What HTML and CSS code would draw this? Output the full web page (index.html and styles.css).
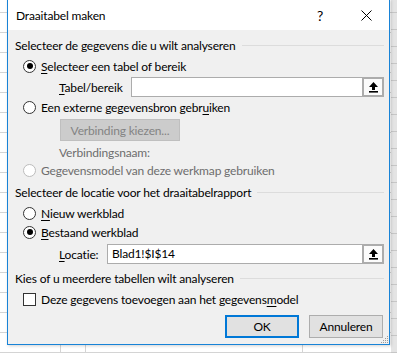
FILE: index.html
```html
<!DOCTYPE html>
<html lang="nl">
<head>
<meta charset="utf-8">
<title>Draaitabel maken</title>
<link rel="stylesheet" href="styles.css">
</head>
<body>
<div class="dialog">
  <div class="titlebar">
    <span class="title">Draaitabel maken</span>
    <span class="tb-btn help">?</span>
    <span class="tb-btn close">
      <svg width="11" height="11" viewBox="0 0 11 11"><path d="M0.5 0.5 L10.5 10.5 M10.5 0.5 L0.5 10.5" stroke="#000" stroke-width="1" fill="none"/></svg>
    </span>
  </div>
  <div class="content">
    <div class="group-head gh1"><span>Selecteer de gegevens die u wilt analyseren</span></div>
    <div class="opt r1"><span class="radio checked"></span><span><u>S</u>electeer een tabel of bereik</span></div>
    <div class="field f-tabel">
      <span class="field-label lbl-tabel"><u>T</u>abel/bereik</span>
      <div class="ref-input"><span class="ref-text"></span><span class="ref-btn"><svg width="11" height="12" viewBox="0 0 11 12"><path d="M5.5 1 L10 6 L7 6 L7 9 L4 9 L4 6 L1 6 Z" fill="#000"/><rect x="1" y="10" width="9" height="1.6" fill="#000"/></svg></span></div>
    </div>
    <div class="opt r2"><span class="radio"></span><span>Een externe gegevensbron gebr<u>u</u>iken</span></div>
    <div class="conn-row"><span class="btn-disabled">Verbinding kiezen...</span></div>
    <div class="opt-label vnaam">Verbindingsnaam:</div>
    <div class="opt r3 disabled"><span class="radio"></span><span>Gegevensmodel van deze werkmap gebruiken</span></div>
    <div class="group-head gh2"><span>Selecteer de locatie voor het draaitabelrapport</span></div>
    <div class="opt r4"><span class="radio"></span><span><u>N</u>ieuw werkblad</span></div>
    <div class="opt r5"><span class="radio checked"></span><span><u>B</u>estaand werkblad</span></div>
    <div class="field f-loc">
      <span class="field-label lbl-loc"><u>L</u>ocatie:</span>
      <div class="ref-input"><span class="ref-text">Blad1!$I$14</span><span class="ref-btn"><svg width="11" height="12" viewBox="0 0 11 12"><path d="M5.5 1 L10 6 L7 6 L7 9 L4 9 L4 6 L1 6 Z" fill="#000"/><rect x="1" y="10" width="9" height="1.6" fill="#000"/></svg></span></div>
    </div>
    <div class="group-head gh3"><span>Kies of u meerdere tabellen wilt analyseren</span></div>
    <div class="opt chk-row"><span class="checkbox"></span><span>Deze gegevens toevoegen aan het gegevens<u>m</u>odel</span></div>
    <div class="actions">
      <span class="btn default">OK</span>
      <span class="btn">Annuleren</span>
    </div>
    <svg class="grip" width="10" height="10" viewBox="0 0 10 10">
      <rect x="8" y="2" width="1" height="1" fill="#9a9a9a"/>
      <rect x="6" y="4" width="1" height="1" fill="#9a9a9a"/><rect x="8" y="4" width="1" height="1" fill="#9a9a9a"/>
      <rect x="4" y="6" width="1" height="1" fill="#9a9a9a"/><rect x="6" y="6" width="1" height="1" fill="#9a9a9a"/><rect x="8" y="6" width="1" height="1" fill="#9a9a9a"/>
      <rect x="2" y="8" width="1" height="1" fill="#9a9a9a"/><rect x="4" y="8" width="1" height="1" fill="#9a9a9a"/><rect x="6" y="8" width="1" height="1" fill="#9a9a9a"/><rect x="8" y="8" width="1" height="1" fill="#9a9a9a"/>
    </svg>
  </div>
</div>
</body>
</html>
```

FILE: styles.css
```css
* { box-sizing: border-box; }
html, body { margin: 0; height: 100%; }
body {
  position: relative;
  overflow: hidden;
  font-family: Lato, "Segoe UI", "Liberation Sans", sans-serif;
  font-size: 12px;
  letter-spacing: -0.16px;
  color: #000;
  background-color: #fff;
  background-image:
    repeating-linear-gradient(to bottom, transparent 0, transparent 12px, #c6c6c6 12px, #c6c6c6 13px, transparent 13px, transparent 17px),
    linear-gradient(to right, transparent 391px, #e4e4e4 391px),
    linear-gradient(to right, transparent 60px, #d4d4d4 60px, #d4d4d4 61px, transparent 61px, transparent 85px, #d4d4d4 85px, #d4d4d4 86px, transparent 86px, transparent 302px, #d4d4d4 302px, #d4d4d4 303px, transparent 303px),
    repeating-linear-gradient(to bottom, transparent 0, transparent 12px, #d4d4d4 12px, #d4d4d4 13px, transparent 13px, transparent 20px);
  background-size: 6px 100%, 100% 100%, 100% 100%, 100% 100%;
  background-position: right top, 0 0, 0 0, 0 0;
  background-repeat: no-repeat;
}
u { text-decoration: underline; text-underline-offset: 2px; }

.dialog {
  position: absolute;
  left: 7px;
  top: -1px;
  width: 383px;
  height: 346px;
  border: 1px solid #1883d7;
  background: #f0f0f0;
  display: flex;
  flex-direction: column;
  box-shadow: 1px 1px 3px rgba(0,0,0,0.18);
}

.titlebar {
  height: 30px;
  background: #fff;
  display: flex;
  align-items: center;
  flex-shrink: 0;
}
.title { padding-left: 8px; flex: 1; font-size: 12px; }
.tb-btn {
  width: 46px;
  height: 30px;
  display: flex;
  align-items: center;
  justify-content: center;
}
.help { font-size: 14px; }

.content {
  position: relative;
  flex: 1;
  padding: 6px 5px 0 7px;
  display: flex;
  flex-direction: column;
}

.group-head {
  height: 18px;
  display: flex;
  align-items: center;
  white-space: nowrap;
}
.group-head::after {
  content: "";
  flex: 1;
  height: 1px;
  margin-left: 6px;
  background: #dcdcdc;
}

.opt {
  height: 18px;
  display: flex;
  align-items: center;
  padding-left: 8px;
  white-space: nowrap;
}
.radio {
  width: 13px;
  height: 13px;
  border: 1px solid #333;
  border-radius: 50%;
  background: #fff;
  margin-right: 5px;
  display: flex;
  align-items: center;
  justify-content: center;
  flex-shrink: 0;
}
.radio.checked::after {
  content: "";
  width: 6px;
  height: 6px;
  border-radius: 50%;
  background: #000;
}
.opt.disabled { color: #6d6d6d; }
.opt.disabled .radio { border-color: #bcbcbc; }

.checkbox {
  width: 13px;
  height: 13px;
  border: 1px solid #333;
  background: #fff;
  margin-right: 5px;
  flex-shrink: 0;
}

.field {
  height: 20px;
  display: flex;
  align-items: center;
  padding-left: 44px;
}
.field-label { flex-shrink: 0; }
.lbl-tabel { width: 72px; }
.lbl-loc { width: 48px; }
.ref-input {
  flex: 1;
  height: 20px;
  display: flex;
  border: 1px solid #acacac;
  background: #fff;
}
.ref-text { flex: 1; padding-left: 4px; line-height: 18px; }
.ref-btn {
  width: 22px;
  margin: -1px -1px -1px 0;
  border: 2px solid #acacac;
  background: #fbfbfb;
  display: flex;
  align-items: center;
  justify-content: center;
}

.conn-row {
  height: 22px;
  display: flex;
  padding-left: 45px;
}
.btn-disabled {
  width: 120px;
  height: 22px;
  background: #cccccc;
  border: 1px solid #bfbfbf;
  color: #838383;
  display: flex;
  align-items: center;
  justify-content: center;
}
.opt-label {
  height: 18px;
  display: flex;
  align-items: center;
  padding-left: 44px;
  color: #6d6d6d;
}

.r1 { margin-top: 3px; }
.f-tabel { margin-top: 2px; }
.r2 { margin-top: 1px; }
.conn-row { margin-top: 3px; }
.vnaam { margin-top: 2px; }
.r3 { margin-top: 0; }
.gh2 { margin-top: 4px; }
.r4 { margin-top: 3px; }
.r5 { margin-top: 1px; }
.f-loc { margin-top: 3px; }
.gh3 { margin-top: 5px; }
.chk-row { margin-top: 3px; }

.actions {
  margin-top: 7px;
  display: flex;
  justify-content: flex-end;
  gap: 10px;
  padding-right: 1px;
}
.btn {
  width: 74px;
  height: 23px;
  background: #e1e1e1;
  border: 1px solid #adadad;
  display: flex;
  align-items: center;
  justify-content: center;
}
.btn.default { border: 2px solid #0078d7; }

.grip {
  position: absolute;
  right: 0;
  bottom: 0;
}
```
